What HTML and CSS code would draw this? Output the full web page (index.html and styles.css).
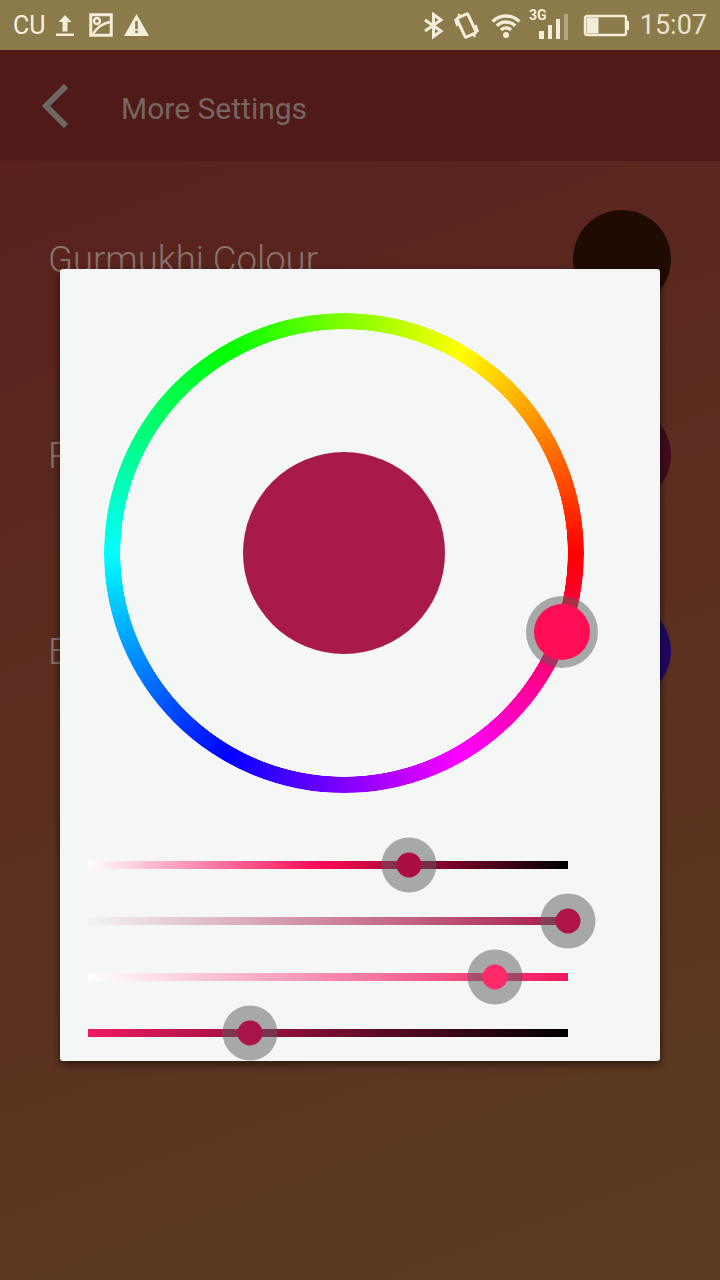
FILE: index.html
```html
<!DOCTYPE html>
<html lang="en">
<head>
  <meta charset="UTF-8">
  <title>More Settings</title>
  <link rel="stylesheet" href="styles.css">
</head>
<body>

  <div class="status-bar">
    <div class="status-group">
      <span class="carrier">CU</span>
      <svg class="icon-upload" width="18" height="21" viewBox="0 0 18 21"><path d="M9 0 15.5 7H11.5V16.5H6.5V7H2.5Z"/><rect y="18.5" width="18" height="2.5"/></svg>
      <svg class="icon-image" width="24" height="24" viewBox="0 0 24 24"><rect x="1.75" y="1.75" width="20.5" height="20.5" class="line"/><circle cx="8" cy="8" r="3" class="thin"/><path d="M4 21Q10 11 21 9" class="thin"/></svg>
      <svg class="icon-warning" width="25" height="22" viewBox="0 0 25 22"><path d="M12.5 0 25 22H0Z"/><rect x="11.2" y="7" width="2.6" height="8" class="mark"/><rect x="11.2" y="16.5" width="2.6" height="2.6" class="mark"/></svg>
    </div>
    <div class="status-group">
      <svg class="icon-bluetooth" width="20" height="25" viewBox="0 0 20 25"><path d="M2 7 18 18 10.5 23.5V1.5L18 7 2 18" class="line"/></svg>
      <svg class="icon-vibrate" width="25" height="25" viewBox="0 0 25 25"><rect x="6.5" y="2" width="12" height="21" rx="1.5" transform="rotate(-25 12.5 12.5)" class="line"/><path d="M1 6 3.5 13M4.5 1 6 4M19.5 21 21 24M21.5 12 24 19" class="thin"/></svg>
      <svg class="icon-wifi" width="32" height="25" viewBox="0 0 32 25"><path d="M2.6 8.6A19 19 0 0 1 29.4 8.6M6.8 12.8A13 13 0 0 1 25.2 12.8M11 17A7 7 0 0 1 21 17" class="line wide"/><circle cx="16" cy="22" r="3"/></svg>
      <svg class="icon-signal" width="39" height="32" viewBox="0 0 39 32"><text x="0" y="11" class="net">3G</text><rect x="10" y="22" width="5" height="8"/><rect x="19" y="16" width="4" height="14"/><rect x="27" y="10" width="4" height="20"/><rect x="35" y="5" width="4" height="26" class="faint"/></svg>
      <svg class="icon-battery" width="45" height="22" viewBox="0 0 45 22"><rect x="1" y="2" width="41" height="19" rx="2" class="thin"/><rect x="2.5" y="3.5" width="12" height="16"/><rect x="43" y="7" width="2" height="9"/></svg>
      <span class="clock">15:07</span>
    </div>
  </div>

  <div class="app-bar">
    <svg class="back" width="26" height="44" viewBox="0 0 26 44"><path d="M24 2 4 22 24 42"/></svg>
    <div class="app-title">More Settings</div>
  </div>

  <div class="settings">
    <div class="setting-row">
      <div class="setting-label">Gurmukhi Colour</div>
      <div class="swatch swatch-dark"></div>
    </div>
    <div class="setting-row">
      <div class="setting-label">Punjabi Colour</div>
      <div class="swatch swatch-red"></div>
    </div>
    <div class="setting-row">
      <div class="setting-label">English Colour</div>
      <div class="swatch swatch-blue"></div>
    </div>
  </div>

  <div class="dialog">
    <div class="wheel">
      <div class="wheel-ring"></div>
      <div class="wheel-center"></div>
      <div class="wheel-thumb"></div>
    </div>

    <div class="sliders">
      <div class="slider">
        <div class="track track-shade"></div>
        <div class="thumb thumb-a" style="left: 66.8%"></div>
      </div>
      <div class="slider">
        <div class="track track-sat"></div>
        <div class="thumb thumb-b" style="left: 100%"></div>
      </div>
      <div class="slider">
        <div class="track track-tint"></div>
        <div class="thumb thumb-c" style="left: 84.8%"></div>
      </div>
      <div class="slider">
        <div class="track track-dark"></div>
        <div class="thumb thumb-d" style="left: 33.75%"></div>
      </div>
    </div>
  </div>

</body>
</html>
```

FILE: styles.css
```css
* {
  box-sizing: border-box;
}

body {
  margin: 0;
  width: 720px;
  height: 1280px;
  overflow: hidden;
  position: relative;
  font-family: Roboto, sans-serif;
  background: linear-gradient(160deg, #591d1c 0%, #5b2c1f 45%, #5c3d22 100%);
}

/* status bar */
.status-bar {
  height: 50px;
  padding: 0 13px;
  display: flex;
  justify-content: space-between;
  align-items: center;
  background: #8b7b4b;
}

.status-group {
  display: flex;
  align-items: center;
}

.status-group svg {
  fill: #f3edd9;
  display: block;
  overflow: visible;
}

.status-group .line,
.status-group .thin {
  fill: none;
  stroke: #f3edd9;
  stroke-width: 3;
}

.status-group .thin {
  stroke-width: 2.4;
}

.status-group .wide {
  stroke-width: 3.4;
}

.status-group .mark {
  fill: #8b7b4b;
}

.status-group .faint {
  fill: #b3a67e;
}

.carrier {
  font-size: 25px;
  color: #f6f0dc;
  line-height: 1;
}

.icon-upload { margin-left: 11px; }
.icon-image { margin-left: 15px; }
.icon-warning { margin-left: 11px; }
.icon-vibrate { margin-left: 11px; }
.icon-wifi { margin-left: 11px; }
.icon-signal { margin-left: 7px; }
.icon-battery { margin-left: 16px; }

.net {
  font-family: Roboto, sans-serif;
  font-size: 14px;
  font-weight: 700;
}

.clock {
  margin-left: 11px;
  font-size: 27px;
  color: #e9e3cd;
  line-height: 1;
}

/* app bar */
.app-bar {
  height: 111px;
  padding-left: 42px;
  display: flex;
  align-items: center;
  background: #4f1a18;
}

.back {
  fill: none;
  stroke: #6d6764;
  stroke-width: 6;
}

.app-title {
  margin: 5px 0 0 53px;
  font-size: 30px;
  color: #776561;
}

/* rows behind the dialog */
.setting-row {
  height: 196px;
  padding: 0 49px 0 48px;
  display: flex;
  justify-content: space-between;
  align-items: center;
}

.setting-label {
  font-size: 36.5px;
  font-weight: 300;
  color: #86736e;
}

.swatch {
  width: 98px;
  height: 98px;
  border-radius: 50%;
}

.swatch-dark { background: #200b03; }
.swatch-red { background: #420a1e; }
.swatch-blue { background: #1f0860; }

/* colour picker */
.dialog {
  position: absolute;
  left: 60px;
  top: 269px;
  width: 600px;
  height: 792px;
  padding-top: 44px;
  background: #f5f6f6;
  border-radius: 3px;
  box-shadow: 0 3px 8px rgba(0, 0, 0, 0.6);
}

.wheel {
  position: relative;
  width: 480px;
  height: 480px;
  margin-left: 44px;
  display: grid;
  place-items: center;
}

.wheel-ring {
  position: absolute;
  inset: 0;
  border-radius: 50%;
  background: conic-gradient(from 90deg, #f00, #f0f, #00f, #0ff, #0f0, #ff0, #f00);
  -webkit-mask: radial-gradient(circle closest-side, transparent calc(100% - 16.5px), #000 calc(100% - 16px));
  mask: radial-gradient(circle closest-side, transparent calc(100% - 16.5px), #000 calc(100% - 16px));
}

.wheel-center {
  width: 202px;
  height: 202px;
  border-radius: 50%;
  background: #a81a47;
}

.wheel-thumb {
  position: absolute;
  left: 458px;
  top: 319px;
  width: 56px;
  height: 56px;
  transform: translate(-50%, -50%);
  border-radius: 50%;
  background: #ff0d55;
  box-shadow: 0 0 0 8px rgba(90, 90, 90, 0.5);
}

.sliders {
  width: 480px;
  margin: 44px 0 0 28px;
}

.slider {
  position: relative;
  height: 56px;
  display: flex;
  align-items: center;
}

.track {
  width: 100%;
  height: 8px;
}

.track-shade { background: linear-gradient(90deg, #fff, #ff0a55 48%, #000); }
.track-sat { background: linear-gradient(90deg, #f3f3f3, #a81a47); }
.track-tint { background: linear-gradient(90deg, #fff, #f2165c); }
.track-dark { background: linear-gradient(90deg, #ee1a60, #000); }

.thumb {
  position: absolute;
  top: 50%;
  width: 25px;
  height: 25px;
  transform: translate(-50%, -50%);
  border-radius: 50%;
  box-shadow: 0 0 0 15px rgba(90, 90, 90, 0.5);
}

.thumb-a { background: #ab0f42; }
.thumb-b { background: #b01448; }
.thumb-c { background: #ff2a68; }
.thumb-d { background: #a8144a; }
```
